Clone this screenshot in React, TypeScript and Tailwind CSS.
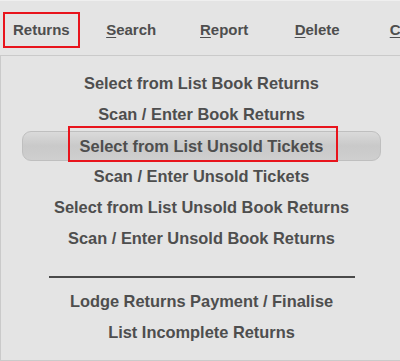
import React from 'react';

const items = [
  'Select from List Book Returns',
  'Scan / Enter Book Returns',
  'Select from List Unsold Tickets',
  'Scan / Enter Unsold Tickets',
  'Select from List Unsold Book Returns',
  'Scan / Enter Unsold Book Returns',
];

const footerItems = ['Lodge Returns Payment / Finalise', 'List Incomplete Returns'];

const tabs = ['Search', 'Report', 'Delete', 'Close'];

export default function App() {
  return (
    <div
      className="w-[400px] h-[361px] overflow-hidden bg-[#e4e4e4] text-[#4e4e4e] font-bold"
      style={{ fontFamily: '"Liberation Sans", Arial, sans-serif' }}
    >
      {/* Menu bar */}
      <div className="h-[55px] border-t border-[#efefef] flex items-start whitespace-nowrap">
        <div className="ml-[3px] mt-[11px] h-[36px] px-[8px] border-2 border-[#e8141c] flex items-center text-[15px]">
          Returns
        </div>
        <div className="ml-[5px] mt-[11px] h-[36px] flex items-center text-[15px]">
          {tabs.map((t) => (
            <span key={t} className="w-[93px] shrink-0 text-center">
              <span className="underline underline-offset-[2px] decoration-1">{t[0]}</span>
              {t.slice(1)}
            </span>
          ))}
        </div>
      </div>

      {/* Dropdown panel */}
      <div className="h-[306px] border-t border-l border-b border-[#cacaca] pl-[2px] pt-[12px] flex flex-col items-center text-[16.4px] whitespace-nowrap">
        {items.map((label, i) =>
          i === 2 ? (
            <div key={label} className="h-[31px] flex items-start">
              <div className="relative mt-[1px] w-[359px] h-[30px] rounded-[9px] border border-[#bfbfbf] bg-gradient-to-b from-[#dadada] via-[#c9c9c9] to-[#cfcfcf] flex items-center justify-center">
                {label}
                <span className="absolute left-[45px] top-[-6px] w-[270px] h-[36px] border-2 border-[#e8141c]" />
              </div>
            </div>
          ) : (
            <div key={label} className="h-[31px] flex items-center justify-center">
              {label}
            </div>
          )
        )}
        <div className="mt-[22px] w-[306px] h-[2px] bg-[#4a4a4a]" />
        <div className="mt-[8px]" />
        {footerItems.map((label) => (
          <div key={label} className="h-[31px] flex items-center justify-center">
            {label}
          </div>
        ))}
      </div>
    </div>
  );
}
